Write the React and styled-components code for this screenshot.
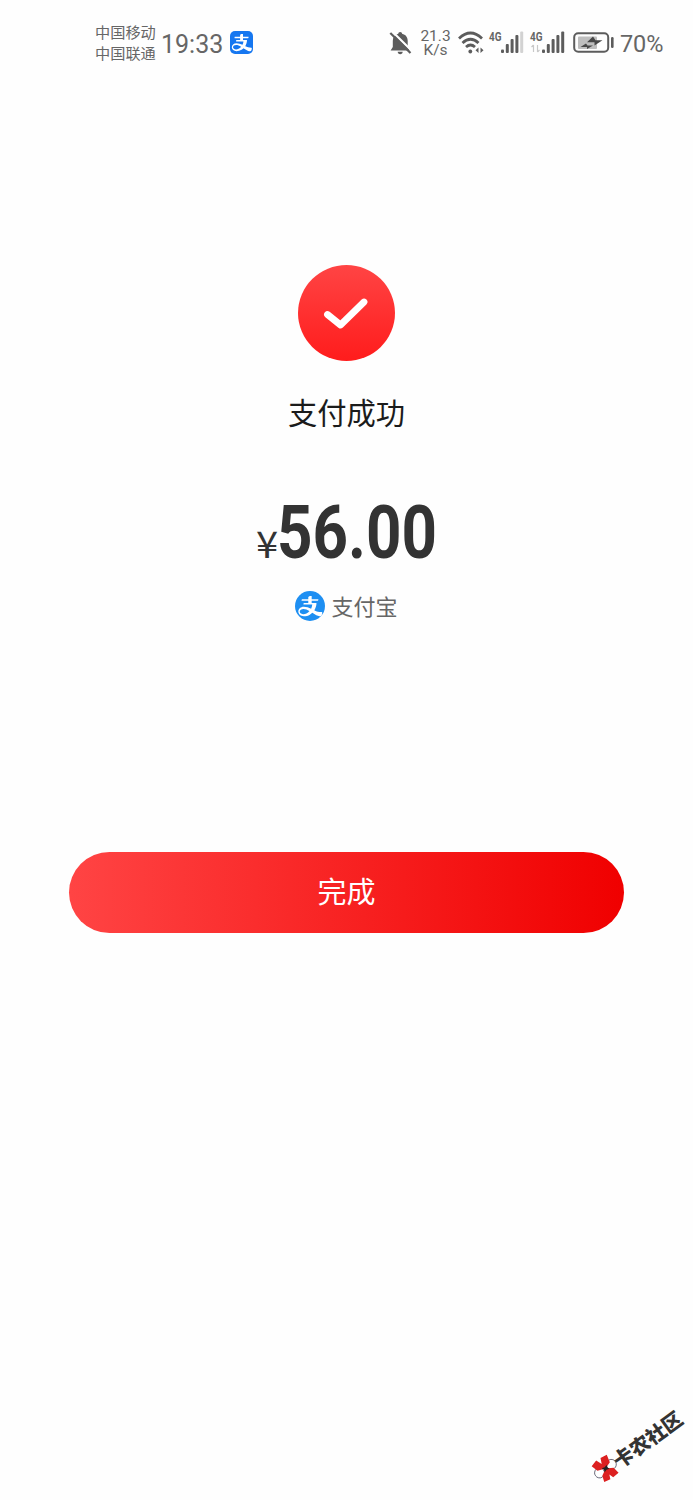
import React from 'react'
import styled, { createGlobalStyle } from 'styled-components'
import { AiFillAlipaySquare } from 'react-icons/ai'

const GlobalStyle = createGlobalStyle`
  body {
    margin: 0;
    background-color: #fefefe;
    font-family: Roboto, "Noto Sans CJK SC", sans-serif;
  }
`

const Screen = styled.div`
  position: relative;
  display: flex;
  flex-direction: column;
  width: 693px;
  height: 1500px;
  overflow: hidden;
  background-color: #fefefe;
`

const StatusBar = styled.header`
  display: flex;
  justify-content: space-between;
  box-sizing: border-box;
  height: 85px;
  padding: 0 27px 0 95px;
  color: #666;
`

const StatusGroup = styled.div`
  display: flex;
  align-items: center;
  height: 85px;
`

const Carriers = styled.div`
  width: 61px;
  margin-right: 5px;
  padding-bottom: 1px;
  font-family: "Noto Sans CJK SC", sans-serif;
  font-size: 15.2px;
  line-height: 21px;
  white-space: nowrap;
`

const Clock = styled.span`
  width: 63px;
  margin-right: 6px;
  padding-top: 3px;
  font-size: 25px;
`

const AlipayLogo = styled.span`
  display: flex;
  align-items: center;
  justify-content: center;
  flex: none;
  width: ${(props) => props.$size}px;
  height: ${(props) => props.$size}px;
  border-radius: ${(props) => props.$radius};
  overflow: hidden;
  background-color: white;
  color: ${(props) => props.$color};

  svg {
    flex: none;
    width: ${(props) => props.$size * props.$zoom}px;
    height: ${(props) => props.$size * props.$zoom}px;
  }
`

const Speed = styled.div`
  width: 31px;
  margin-right: 7px;
  font-size: 15.5px;
  line-height: 14px;
  text-align: center;
`

const StatusIcon = styled.svg`
  display: block;
  flex: none;
  margin-right: ${(props) => props.$gap}px;
  overflow: visible;
`

const Battery = styled.span`
  width: 46px;
  padding-top: 2px;
  font-size: 23.5px;
  letter-spacing: -0.1px;
`

const Result = styled.main`
  display: flex;
  flex-direction: column;
  align-items: center;
  padding-top: 180px;
`

const SuccessMark = styled.div`
  width: 97px;
  height: 96px;
  border-radius: 50%;
  background: linear-gradient(#ff4444, #ff1c1c);
`

const Title = styled.h1`
  margin: 28px 0 0;
  color: #1b1b1b;
  font-family: "Noto Sans CJK SC", sans-serif;
  font-size: 29.3px;
  font-weight: 400;
  line-height: 44px;
`

const Amount = styled.div`
  display: flex;
  align-items: baseline;
  width: 181px;
  height: 88px;
  margin-top: 55px;
  color: #333;
  line-height: 88px;
`

const Currency = styled.span`
  width: 22px;
  font-family: "Noto Sans CJK SC", sans-serif;
  font-size: 37px;
  transform: scaleX(1.08);
  transform-origin: left;
`

const Digits = styled.span`
  font-size: 75px;
  font-weight: 700;
  transform: scaleX(0.825);
  transform-origin: left;
`

const Method = styled.div`
  display: flex;
  align-items: center;
  gap: 6px;
  height: 32px;
  margin-top: 14px;
  color: #666;
  font-family: "Noto Sans CJK SC", sans-serif;
  font-size: 22px;
  line-height: 32px;
`

const MethodName = styled.span`
  margin-top: -2px;
`

const DoneButton = styled.button`
  width: 555px;
  height: 81px;
  margin-top: 230px;
  padding: 0 0 5px;
  border: none;
  border-radius: 41px;
  background: linear-gradient(90deg, #ff4444, #f00000);
  color: white;
  font-family: "Noto Sans CJK SC", sans-serif;
  font-size: 29px;
`

const Watermark = styled.div`
  position: absolute;
  left: 585px;
  top: 1431px;
  display: flex;
  align-items: center;
  width: 106px;
  height: 28px;
  color: #333;
  font-family: "Noto Sans CJK SC", sans-serif;
  font-size: 20px;
  font-weight: 900;
  line-height: 28px;
  white-space: nowrap;
  transform: rotate(-36deg);

  span {
    margin: 1px 0 0 -2px;
  }
`

const BellOffIcon = () => (
  <StatusIcon $gap={8} width="23" height="24" viewBox="0 0 23 24">
    <path d="M11.2 1c1.2 0 1.8.8 1.9 1.8 3.5.8 5.6 3.4 5.6 7V16l2.1 3.5H1.6L3.8 16V9.8c0-3.6 2-6.2 5.5-7 .1-1 .7-1.8 1.9-1.8z" fill="#5c5c5c" />
    <path d="M8.7 20.8h5c0 1.5-1 2.5-2.5 2.5s-2.5-1-2.5-2.5z" fill="#5c5c5c" />
    <path d="M3.5.8L23.5 20.5" stroke="#fefefe" strokeWidth="2.2" />
    <path d="M1.3 2L21.5 22" stroke="#5c5c5c" strokeWidth="2.2" />
  </StatusIcon>
)

const WifiIcon = () => (
  <StatusIcon $gap={5} width="26" height="24" viewBox="0 0 26 24">
    <g fill="none" stroke="#5c5c5c" strokeWidth="2.8">
      <path d="M1 7.5Q12.5-3.5 24 7.5" />
      <path d="M4.5 12Q12.5 4.5 20.5 12" />
      <path d="M8 16Q12.5 12 17 16" />
    </g>
    <circle cx="12.3" cy="20.5" r="1.9" fill="#5c5c5c" />
    <path d="M20.5 16.5v5.6l-3-2.8zM22.5 16.5v5.6l3-2.8z" fill="#5c5c5c" />
  </StatusIcon>
)

const SignalIcon = ({ weak, gap }) => (
  <StatusIcon $gap={gap} width="35" height="25" viewBox="0 0 35 25">
    <text x="0" y="10.5" fontSize="13" fontWeight="700" fill="#666" textLength="12.5" lengthAdjust="spacingAndGlyphs">4G</text>
    {!weak && (
      <path d="M3.5 15v7M1.5 17l2-2M7.5 15v7M9.5 20l-2 2" fill="none" stroke="#c8c8c8" strokeWidth="1.2" />
    )}
    <g fill="#5c5c5c">
      <rect x="12" y="19.5" width="3" height="3.5" rx="1" />
      <rect x="16.8" y="14" width="3" height="9" rx="1" />
      <rect x="21.6" y="9" width="3" height="14" rx="1" />
      <rect x="26.4" y="5" width="3" height="18" rx="1" />
      <rect x="31.2" y="1.5" width="3" height="21.5" rx="1" fill={weak ? '#d2d2d2' : '#5c5c5c'} />
    </g>
  </StatusIcon>
)

const BatteryIcon = () => (
  <StatusIcon $gap={5} width="42" height="21" viewBox="0 0 42 21">
    <rect x="1.2" y="1.2" width="34" height="18.6" rx="4" fill="none" stroke="#5c5c5c" strokeWidth="2" />
    <rect x="5" y="4.5" width="19" height="12.5" rx="1" fill="#bebebe" />
    <rect x="38" y="5" width="2.6" height="11" rx="1.2" fill="#5c5c5c" />
    <path d="M20 4.5l2.5 3.8h7L21.5 13.5v-3.2H14z" fill="#484848" />
    <path d="M13 11.5l1.5 2h5.5L14 17v-2H7.5z" fill="#484848" />
  </StatusIcon>
)

const WatermarkLogo = () => (
  <svg width="26" height="28" viewBox="0 0 26 28">
    <circle cx="5.5" cy="14" r="5" fill="#fff" stroke="#556" strokeWidth="0.8" />
    <circle cx="20" cy="14" r="5" fill="#fff" stroke="#556" strokeWidth="0.8" />
    <path d="M3 4l7-2 2.5 6L15 2.5l7 1-2 8-7 2.5-8-3zM4 24l2-6 7-4 7 4 1 7-7 .5-1.5-4.5-2 4.5z" fill="#dc2020" />
    <path d="M10 11.5l3 1 3-1-1 2.5 1 2.5-3-1-3 1 1-2.5z" fill="#222" />
  </svg>
)

export default function App() {
  return (
    <>
      <GlobalStyle />
      <Screen>
        <StatusBar>
          <StatusGroup>
            <Carriers>
              <div>中国移动</div>
              <div>中国联通</div>
            </Carriers>
            <Clock>19:33</Clock>
            <AlipayLogo $size={23} $zoom={1.55} $radius="5px" $color="#1677f0">
              <AiFillAlipaySquare />
            </AlipayLogo>
          </StatusGroup>
          <StatusGroup>
            <BellOffIcon />
            <Speed>
              <div>21.3</div>
              <div>K/s</div>
            </Speed>
            <WifiIcon />
            <SignalIcon weak gap={6} />
            <SignalIcon gap={8} />
            <BatteryIcon />
            <Battery>70%</Battery>
          </StatusGroup>
        </StatusBar>
        <Result>
          <SuccessMark>
            <svg width="96" height="96" viewBox="0 0 96 96">
              <path d="M29.5 49.5L42.5 60L66 37" fill="none" stroke="#fff" strokeWidth="6.8" strokeLinecap="round" strokeLinejoin="round" />
            </svg>
          </SuccessMark>
          <Title>支付成功</Title>
          <Amount>
            <Currency>¥</Currency>
            <Digits>56.00</Digits>
          </Amount>
          <Method>
            <AlipayLogo $size={30} $zoom={1.42} $radius="50%" $color="#1e8ff2">
              <AiFillAlipaySquare />
            </AlipayLogo>
            <MethodName>支付宝</MethodName>
          </Method>
          <DoneButton>完成</DoneButton>
        </Result>
        <Watermark>
          <WatermarkLogo />
          <span>卡农社区</span>
        </Watermark>
      </Screen>
    </>
  )
}
